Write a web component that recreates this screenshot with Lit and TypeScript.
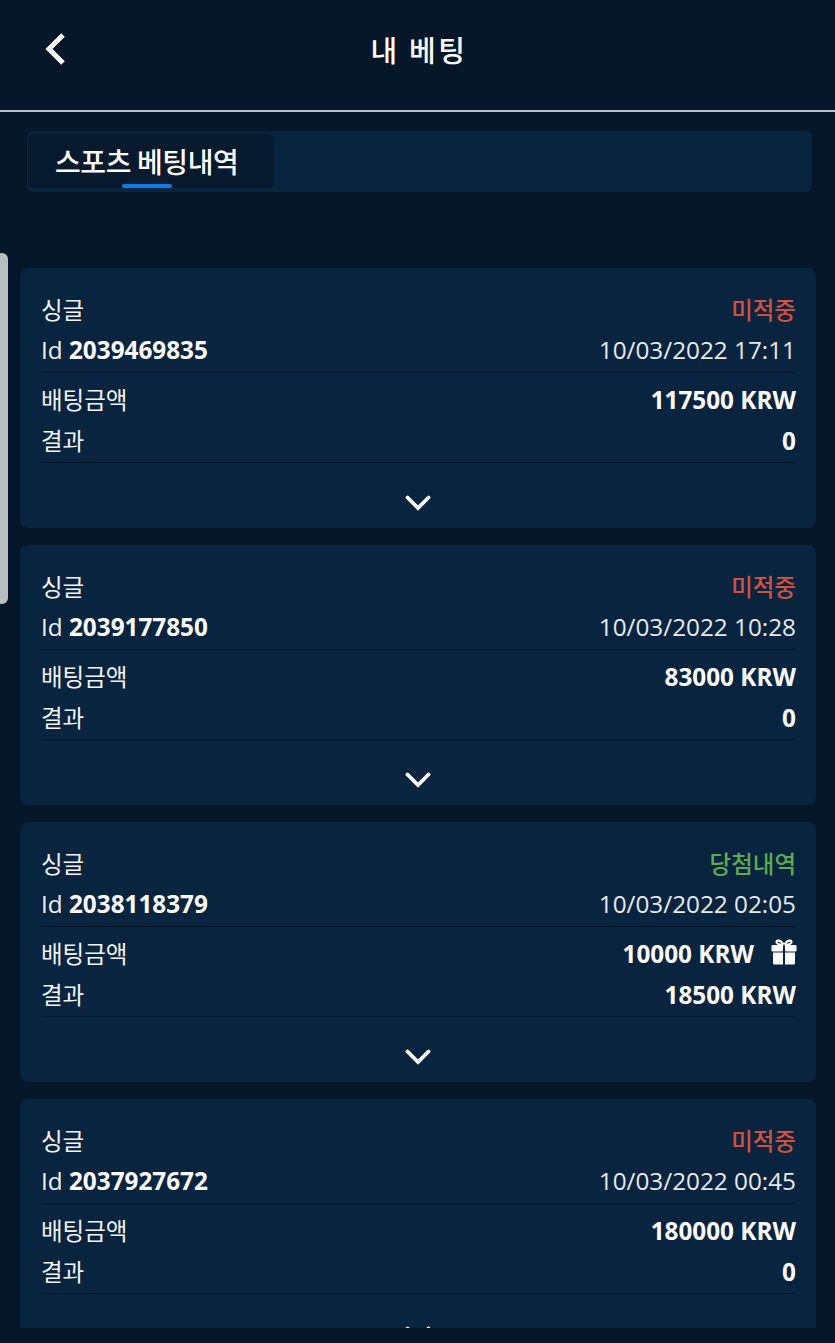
import { LitElement, html, css, svg } from "lit";
import { customElement } from "lit/decorators.js";

type Bet = { id: string; date: string; status: string; win?: boolean; stake: string; result: string; gift?: boolean };

const BETS: Bet[] = [
  { id: "2039469835", date: "10/03/2022 17:11", status: "미적중", stake: "117500 KRW", result: "0" },
  { id: "2039177850", date: "10/03/2022 10:28", status: "미적중", stake: "83000 KRW", result: "0" },
  { id: "2038118379", date: "10/03/2022 02:05", status: "당첨내역", win: true, stake: "10000 KRW", result: "18500 KRW", gift: true },
  { id: "2037927672", date: "10/03/2022 00:45", status: "미적중", stake: "180000 KRW", result: "0" },
];

const chevron = svg`<svg class="chev" width="26" height="16" viewBox="0 0 26 16"><path d="M2.500 2.500 13 13 23.500 2.500" fill="none" stroke="#fff" stroke-width="3.800" stroke-linecap="round" stroke-linejoin="miter"/></svg>`;

const gift = svg`<svg class="gift" width="26" height="26" viewBox="0 0 26 26"><g fill="#fff"><rect x="0.500" y="6" width="11.500" height="6.500" rx="1"/><rect x="14" y="6" width="11.500" height="6.500" rx="1"/><path d="M2 13.500h10V25.500H3.500A1.500 1.500 0 0 1 2 24z"/><path d="M14 13.500H24V24a1.500 1.500 0 0 1-1.500 1.500H14z"/></g><path d="M12.500 6C9 5.800 5.500 5.300 5.500 3 5.500 .8 9.500 .8 12.500 5.300M13.500 6C17 5.800 20.500 5.300 20.500 3 20.500 .8 16.500 .8 13.500 5.300" fill="none" stroke="#fff" stroke-width="2.200"/></svg>`;

@customElement("app-root")
export class AppRoot extends LitElement {
  static styles = css`
    :host {
      display: block;
      position: relative;
      width: 835px;
      height: 1343px;
      overflow: hidden;
      background: #06172a;
      color: #fff;
      font-family: "Open Sans", "Noto Sans CJK KR", sans-serif;
    }
    .view { height: 1328px; overflow: hidden; }
    .header {
      height: 110px;
      box-sizing: border-box;
      display: flex;
      align-items: center;
      justify-content: center;
      position: relative;
      padding: 0 0 12px 3px;
    }
    .back { position: absolute; left: 44px; top: 31px; }
    .title {
      font-family: "Noto Sans CJK KR", sans-serif;
      font-size: 29px;
      font-weight: 500;
      letter-spacing: 2.600px;
      line-height: 40px;
    }
    .rule { height: 2px; margin-bottom: -1px; background: #b9bfc5; }
    .tabs {
      margin: 20px 23px 0 27px;
      height: 61px;
      box-sizing: border-box;
      padding: 3px 1px;
      background: #09243f;
      border-radius: 6px;
      display: flex;
    }
    .tab {
      position: relative;
      width: 246px;
      height: 54px;
      box-sizing: border-box;
      padding: 7px 0 0 27px;
      background: #071a2e;
      border-radius: 6px;
      font-family: "Noto Sans CJK KR", sans-serif;
      font-size: 28px;
      font-weight: 500;
      line-height: 40px;
      letter-spacing: -0.400px;
      white-space: nowrap;
    }
    .tab::after {
      content: "";
      position: absolute;
      left: 94px;
      bottom: 0;
      width: 50px;
      height: 4px;
      border-radius: 2px;
      background: #0f7ae5;
    }
    .list {
      margin: 76px 19px 0 20px;
      display: flex;
      flex-direction: column;
      gap: 17px;
    }
    .card {
      background: #09243f;
      border-radius: 8px;
      height: 260px;
      flex: none;
      box-sizing: border-box;
      padding: 22px 20px 0 21px;
    }
    .row {
      display: flex;
      justify-content: space-between;
      align-items: center;
      height: 41px;
      box-sizing: border-box;
      padding-bottom: 4px;
      font-size: 24.300px;
      white-space: nowrap;
    }
    .row.low { padding-bottom: 2px; }
    .ko { font-family: "Noto Sans CJK KR", sans-serif; font-size: 23.500px; color: #f1f3f5; }
    .low .ko { margin-bottom: 2px; }
    .sep { height: 1px; background: #06172a; }
    .sep.a { margin-bottom: 7px; }
    .id { color: #f1f3f5; }
    .id b { color: #fff; font-weight: 700; }
    .date { color: #e6eaee; }
    .val { font-weight: 700; display: flex; align-items: center; gap: 17px; }
    .status { font-family: "Noto Sans CJK KR", sans-serif; font-weight: 500; font-size: 23.500px; color: #d2503f; }
    .status.win { color: #5cab4d; }
    .more { display: flex; justify-content: center; padding: 32px 2px 0 0; }
    .chev { display: block; }
    .gift { display: block; margin: -3px -1px 0 0; }
    .scroll {
      position: absolute;
      left: -4px;
      top: 253px;
      width: 12px;
      height: 351px;
      border-radius: 6px;
      background: #b9bec2;
    }
  `;

  render() {
    return html`
      <div class="view">
        <div class="header">
          <svg class="back" width="24" height="36" viewBox="0 0 24 36"><path d="M19 4 5 18l14 14" fill="none" stroke="#fff" stroke-width="5" stroke-linecap="butt" stroke-linejoin="miter"/></svg>
          <div class="title">내 베팅</div>
        </div>
        <div class="rule"></div>
        <div class="tabs"><div class="tab">스포츠 베팅내역</div></div>
        <div class="list">
          ${BETS.map(
            (b) => html`
              <div class="card">
                <div class="row"><span class="ko">싱글</span><span class="status ${b.win ? "win" : ""}">${b.status}</span></div>
                <div class="row"><span class="id">Id <b>${b.id}</b></span><span class="date">${b.date}</span></div>
                <div class="sep a"></div>
                <div class="row low"><span class="ko">배팅금액</span><span class="val">${b.stake}${b.gift ? gift : ""}</span></div>
                <div class="row low"><span class="ko">결과</span><span class="val">${b.result}</span></div>
                <div class="sep"></div>
                <div class="more">${chevron}</div>
              </div>
            `
          )}
        </div>
      </div>
      <div class="scroll"></div>
    `;
  }
}
